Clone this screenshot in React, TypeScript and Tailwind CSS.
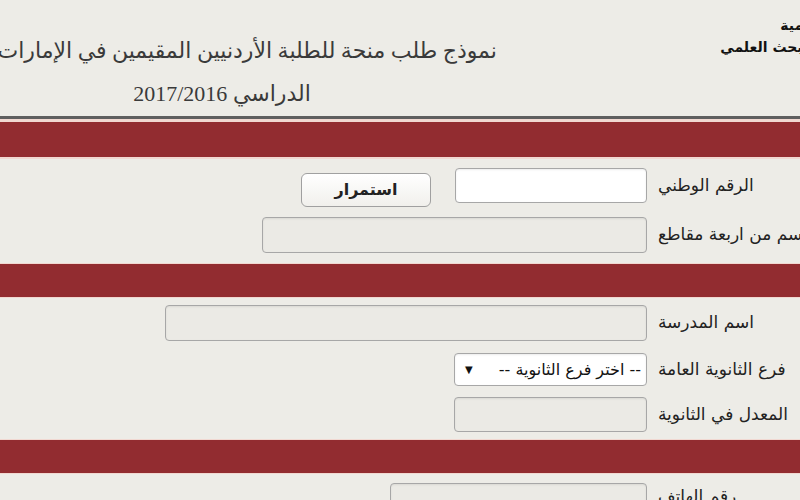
import React from "react";

const font = "font-['Liberation_Serif','DejaVu_Sans',serif]";

function Band({ top = "border-t", bottom = "border-b", h = "h-[35px]" }: { top?: string; bottom?: string; h?: string }) {
    return <div className={`${top} ${bottom} border-[#f1d8d1] bg-[#922c30] ${h}`} />;
}

function Label({ children }: { children: React.ReactNode }) {
    return (
        <div className="w-[250px] shrink-0 text-left text-[17px] text-[#222] font-['DejaVu_Sans',sans-serif] whitespace-nowrap">
            {children}
        </div>
    );
}

const inputWhite = "block shrink-0 rounded-[4px] border border-[#a7a7a7] bg-white shadow-[inset_0_1px_2px_rgba(0,0,0,0.08)]";
const inputGray = "block shrink-0 rounded-[4px] border border-[#a7a7a7] bg-[#ebeae5] shadow-[inset_0_1px_2px_rgba(0,0,0,0.08)]";

export default function App() {
    return (
        <div className={`w-[800px] h-[500px] overflow-hidden bg-[#edece7] ${font}`}>
            <div dir="rtl" className="w-[1100px] ml-[-100px]">
                {/* header */}
                <div className="flex h-[119px] border-b-[3px] border-[#5f5f5f]">
                    <div className="w-[478px] shrink-0 pt-[14px] pr-[47px] text-right text-[14px] font-bold leading-[22px] text-[#111] font-['DejaVu_Sans',sans-serif] whitespace-nowrap">
                        <div>المملكة الأردنية الهاشمية</div>
                        <div className="-mr-[10px]">وزارة التعليم العالي والبحث العلمي</div>
                    </div>
                    <div className="w-[600px] shrink-0 pt-[29px] text-center text-[22px] leading-[43px] text-[#3a3a3a] whitespace-nowrap">
                        <div>نموذج طلب منحة للطلبة الأردنيين المقيمين في الإمارات للعام</div>
                        <div>الدراسي 2017/2016</div>
                    </div>
                </div>

                <Band top="border-t-[3px]" bottom="border-b-[2px]" h="h-[40px]" />

                {/* section 1 */}
                <div className="pt-[9px] pb-[10px] pr-[92px]">
                    <div className="flex h-[39px] items-start gap-[11px]">
                        <Label>
                            <div className="h-[35px] leading-[35px]">الرقم الوطني</div>
                        </Label>
                        <input className={`${inputWhite} w-[192px] h-[35px]`} />
                        <button className="mr-[13px] mt-[5px] h-[34px] w-[130px] shrink-0 rounded-[6px] border border-[#a0a0a0] bg-gradient-to-b from-white to-[#f1f0ec] text-[16px] font-semibold text-[#222] font-['DejaVu_Sans',sans-serif]">
                            استمرار
                        </button>
                    </div>
                    <div className="mt-[10px] flex h-[36px] items-center gap-[11px]">
                        <Label>الاسم من اربعة مقاطع</Label>
                        <input disabled className={`${inputGray} w-[385px] h-[36px]`} />
                    </div>
                </div>

                <Band />

                {/* section 2 */}
                <div className="pt-[7px] pb-[7px] pr-[92px]">
                    <div className="flex h-[36px] items-center gap-[11px]">
                        <Label>اسم المدرسة</Label>
                        <input disabled className={`${inputGray} w-[482px] h-[36px]`} />
                    </div>
                    <div className="mt-[12px] flex h-[33px] items-center gap-[11px]">
                        <Label>فرع الثانوية العامة</Label>
                        <div className={`${inputWhite} w-[193px] h-[33px] flex items-center justify-between pr-[5px] pl-[10px] text-[16px] text-[#111] font-['DejaVu_Sans',sans-serif]`}>
                            <span>-- اختر فرع الثانوية --</span>
                            <span className="text-[10px]">▼</span>
                        </div>
                    </div>
                    <div className="mt-[11px] flex h-[35px] items-center gap-[11px]">
                        <Label>المعدل في الثانوية</Label>
                        <input disabled className={`${inputGray} w-[193px] h-[35px]`} />
                    </div>
                </div>

                <Band />

                {/* section 3 */}
                <div className="pt-[9px] pr-[92px]">
                    <div className="flex h-[36px] items-start gap-[11px]">
                        <Label>
                            <div className="pt-[1px] leading-[24px]">رقم الهاتف</div>
                        </Label>
                        <input disabled className={`${inputGray} w-[257px] h-[36px]`} />
                    </div>
                </div>
            </div>
        </div>
    );
}
